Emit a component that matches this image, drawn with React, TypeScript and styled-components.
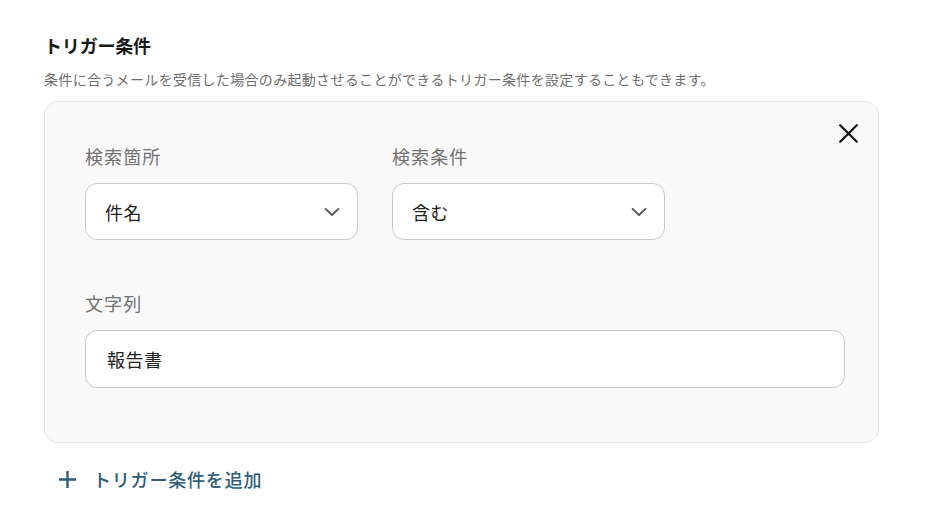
import React from "react";
import styled, { createGlobalStyle } from "styled-components";

const GlobalStyle = createGlobalStyle`
  html, body { margin: 0; padding: 0; background: #ffffff; }
  body {
    font-family: "Noto Sans CJK JP", "Noto Sans", sans-serif;
    color: #1f1f1f;
    -webkit-font-smoothing: antialiased;
  }
  * { box-sizing: border-box; }
`;

const Page = styled.div`
  width: 933px;
  padding: 32px 54px 0 44px;
  display: flex;
  flex-direction: column;
`;

const Title = styled.h2`
  margin: 0;
  font-size: 18px;
  line-height: 26px;
  font-weight: 700;
  color: #1a1a1a;
  letter-spacing: -0.01em;
`;

const Description = styled.p`
  margin: 11px 0 0;
  font-size: 14px;
  line-height: 20px;
  font-weight: 400;
  color: #6e6e6e;
  letter-spacing: 0.023em;
`;

const Card = styled.section`
  position: relative;
  margin-top: 12px;
  width: 835px;
  background: #f9f9f9;
  border: 1px solid #e6e6e6;
  border-radius: 14px;
  padding: 41px 33px 54px 40px;
  display: flex;
  flex-direction: column;
`;

const CloseButton = styled.button`
  position: absolute;
  top: 21px;
  right: 20px;
  width: 20px;
  height: 20px;
  padding: 0;
  border: none;
  background: transparent;
  display: flex;
  align-items: center;
  justify-content: center;
  cursor: pointer;
  color: #111;
`;

const FieldRow = styled.div<{ $mt?: number }>`
  display: flex;
  gap: 34px;
  margin-top: ${(p) => p.$mt ?? 0}px;
`;

const Field = styled.div<{ $width: number }>`
  display: flex;
  flex-direction: column;
  gap: 14px;
  width: ${(p) => p.$width}px;
`;

const Label = styled.label`
  font-size: 18px;
  line-height: 26px;
  font-weight: 400;
  color: #707070;
  letter-spacing: 0.06em;
`;

const Box = styled.div<{ $pl: number; $h: number }>`
  height: ${(p) => p.$h}px;
  background: #ffffff;
  border: 1px solid #c9c9c9;
  border-radius: 12px;
  display: flex;
  align-items: center;
  justify-content: space-between;
  padding: 0 17px 0 ${(p) => p.$pl}px;
  font-size: 18px;
  color: #222222;
  letter-spacing: 0.03em;
`;

const AddButton = styled.button`
  margin-top: 23px;
  align-self: flex-start;
  display: flex;
  align-items: center;
  gap: 16px;
  border: none;
  background: transparent;
  padding: 0 0 0 14px;
  font-family: inherit;
  font-size: 18px;
  line-height: 26px;
  font-weight: 500;
  color: #2d5e7a;
  cursor: pointer;
  letter-spacing: 0.045em;
`;

const Chevron = () => (
  <svg width="16" height="10" viewBox="0 0 16 10" fill="none">
    <path d="M1.5 1.8 L8 8 L14.5 1.8" stroke="#555" strokeWidth="1.8" strokeLinecap="round" strokeLinejoin="round" />
  </svg>
);

const CloseIcon = () => (
  <svg width="19" height="19" viewBox="0 0 19 19" fill="none">
    <path d="M1.2 1.2 L17.8 17.8 M17.8 1.2 L1.2 17.8" stroke="#111" strokeWidth="2.2" strokeLinecap="round" />
  </svg>
);

const PlusIcon = () => (
  <svg width="19" height="19" viewBox="0 0 19 19" fill="none">
    <path d="M9.5 1 V18 M1 9.5 H18" stroke="#2d5e7a" strokeWidth="2.4" />
  </svg>
);

export default function App() {
  return (
    <>
      <GlobalStyle />
      <Page>
        <Title>トリガー条件</Title>
        <Description>
          条件に合うメールを受信した場合のみ起動させることができるトリガー条件を設定することもできます。
        </Description>
        <Card>
          <CloseButton aria-label="close">
            <CloseIcon />
          </CloseButton>
          <FieldRow>
            <Field $width={273}>
              <Label>検索箇所</Label>
              <Box $pl={19} $h={57}>
                <span>件名</span>
                <Chevron />
              </Box>
            </Field>
            <Field $width={273}>
              <Label>検索条件</Label>
              <Box $pl={19} $h={57}>
                <span>含む</span>
                <Chevron />
              </Box>
            </Field>
          </FieldRow>
          <FieldRow $mt={50}>
            <Field $width={760}>
              <Label>文字列</Label>
              <Box $pl={21} $h={58}>
                <span>報告書</span>
              </Box>
            </Field>
          </FieldRow>
        </Card>
        <AddButton>
          <PlusIcon />
          <span>トリガー条件を追加</span>
        </AddButton>
      </Page>
    </>
  );
}
